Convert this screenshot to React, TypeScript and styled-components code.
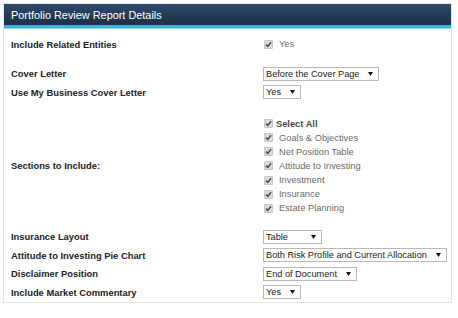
import React from "react";
import styled, { createGlobalStyle } from "styled-components";

const GlobalStyle = createGlobalStyle`
  body {
    margin: 0;
    background: #fff;
    font-family: "Liberation Sans", Arial, sans-serif;
  }
`;

const Page = styled.div`
  padding: 3px 0 0 3px;
`;

const Panel = styled.div`
  width: 447px;
  border: 1px solid #e4e4e4;
  padding-bottom: 1px;
`;

const Header = styled.div`
  height: 21px;
  display: flex;
  align-items: center;
  padding: 0 7px;
  background: linear-gradient(#2f4b68, #1b2f49);
  border-bottom: 3px solid #37b4e2;
  box-shadow: 0 1px 0 #9ad9f2;
  color: #fff;
  font-size: 10.9px;
`;

const Body = styled.div`
  display: flex;
  flex-direction: column;
  padding-top: 7px;
`;

const Row = styled.div<{ $gap?: number }>`
  display: grid;
  grid-template-columns: 259px 1fr;
  align-items: center;
  min-height: 18.5px;
  margin-top: ${(p) => p.$gap ?? 0}px;
`;

const Label = styled.div`
  padding-left: 7px;
  font-size: 9.4px;
  font-weight: bold;
  color: #222;
`;

const Value = styled.div`
  display: flex;
  flex-direction: column;
  align-items: flex-start;
`;

const CheckRow = styled.div`
  display: flex;
  align-items: center;
  height: 14.15px;
`;

const Box = styled.span`
  width: 9px;
  height: 9px;
  box-sizing: border-box;
  margin-left: 1px;
  background: #dadada;
  border: 1px solid #c6c6c6;
  border-radius: 1px;
  display: flex;
  align-items: center;
  justify-content: center;
`;

const CheckText = styled.span<{ $bold?: boolean }>`
  margin-left: ${(p) => (p.$bold ? 3 : 6)}px;
  font-size: 9.3px;
  font-weight: ${(p) => (p.$bold ? "bold" : "normal")};
  color: ${(p) => (p.$bold ? "#4a4a4a" : "#6a6a6a")};
`;

const Select = styled.div<{ $width?: number }>`
  display: flex;
  align-items: center;
  justify-content: space-between;
  box-sizing: border-box;
  height: 14px;
  min-width: ${(p) => (p.$width ? `${p.$width}px` : "0")};
  padding: 0 5px 0 2px;
  background: #fff;
  border: 1px solid #b9b9b9;
  font-size: 9.2px;
  color: #222;
  white-space: nowrap;
`;

const Arrow = styled.svg`
  margin-left: 9px;
  flex: none;
`;

const Check = () => (
  <Box>
    <svg width="7" height="7" viewBox="0 0 7 7">
      <path d="M1 3.6 L2.8 5.4 L6 1.2" fill="none" stroke="#4a4a4a" strokeWidth="1.5" />
    </svg>
  </Box>
);

const Dropdown = ({ text, width }: { text: string; width?: number }) => (
  <Select $width={width}>
    <span>{text}</span>
    <Arrow width="5" height="4" viewBox="0 0 5 4">
      <path d="M0 0 H5 L2.5 4 Z" fill="#111" />
    </Arrow>
  </Select>
);

const sections = [
  "Goals & Objectives",
  "Net Position Table",
  "Attitude to Investing",
  "Investment",
  "Insurance",
  "Estate Planning",
];

export default function App() {
  return (
    <Page>
      <GlobalStyle />
      <Panel>
        <Header>Portfolio Review Report Details</Header>
        <Body>
          <Row>
            <Label>Include Related Entities</Label>
            <Value>
              <CheckRow>
                <Check />
                <CheckText>Yes</CheckText>
              </CheckRow>
            </Value>
          </Row>
          <Row $gap={11}>
            <Label>Cover Letter</Label>
            <Value>
              <Dropdown text="Before the Cover Page" />
            </Value>
          </Row>
          <Row>
            <Label>Use My Business Cover Letter</Label>
            <Value>
              <Dropdown text="Yes" />
            </Value>
          </Row>
          <Row $gap={15}>
            <Label>Sections to Include:</Label>
            <Value>
              <CheckRow>
                <Check />
                <CheckText $bold>Select All</CheckText>
              </CheckRow>
              {sections.map((s) => (
                <CheckRow key={s}>
                  <Check />
                  <CheckText>{s}</CheckText>
                </CheckRow>
              ))}
            </Value>
          </Row>
          <Row $gap={12}>
            <Label>Insurance Layout</Label>
            <Value>
              <Dropdown text="Table" width={59} />
            </Value>
          </Row>
          <Row>
            <Label>Attitude to Investing Pie Chart</Label>
            <Value>
              <Dropdown text="Both Risk Profile and Current Allocation" />
            </Value>
          </Row>
          <Row>
            <Label>Disclaimer Position</Label>
            <Value>
              <Dropdown text="End of Document" />
            </Value>
          </Row>
          <Row>
            <Label>Include Market Commentary</Label>
            <Value>
              <Dropdown text="Yes" />
            </Value>
          </Row>
        </Body>
      </Panel>
    </Page>
  );
}
